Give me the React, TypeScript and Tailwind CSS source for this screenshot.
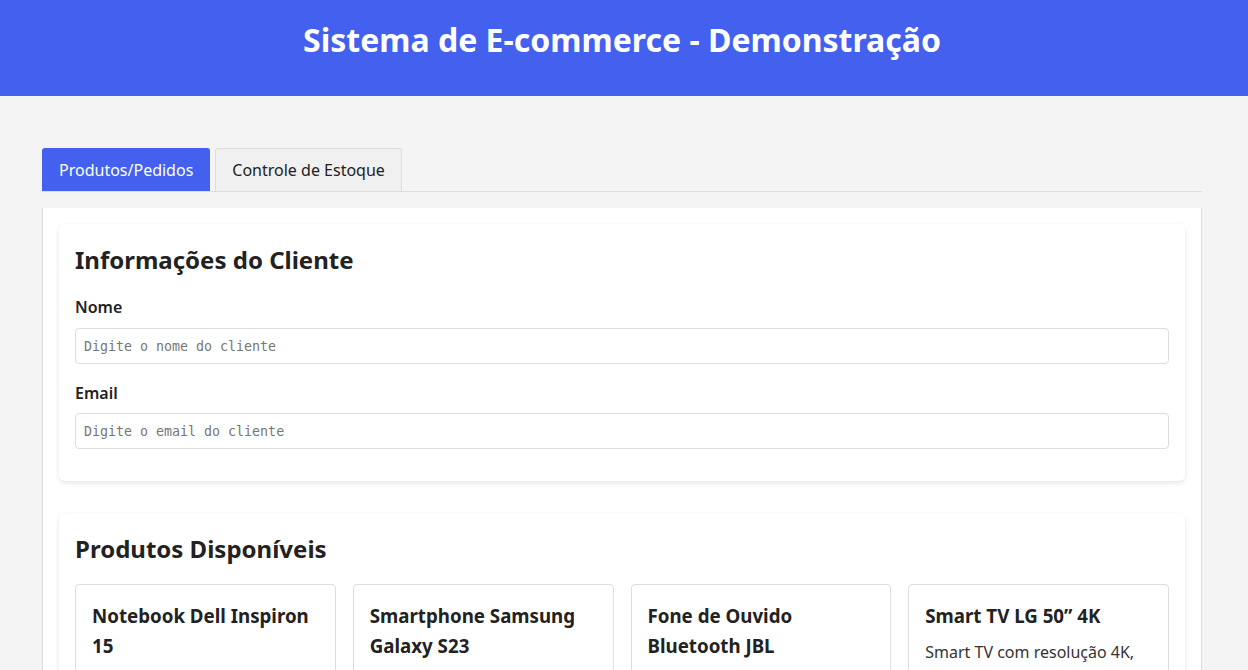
import React, { useState } from "react";

const products = [
  {
    name: "Notebook Dell Inspiron 15",
    description: "Notebook com processador Intel Core i7, 16GB de RAM e SSD de 512GB.",
  },
  {
    name: "Smartphone Samsung Galaxy S23",
    description: "Smartphone com tela de 6.1 polegadas, câmera tripla e 256GB.",
  },
  {
    name: "Fone de Ouvido Bluetooth JBL",
    description: "Fone sem fio com cancelamento de ruído e bateria de 30 horas.",
  },
  {
    name: "Smart TV LG 50\u201D 4K",
    description: "Smart TV com resolução 4K, HDR e sistema webOS.",
  },
];

const App = () => {
  const [tab, setTab] = useState<"produtos" | "estoque">("produtos");

  return (
    <div
      className="min-h-screen bg-[#f4f4f4] text-[#222]"
      style={{ fontFamily: '"Noto Sans", "Open Sans", sans-serif' }}
    >
      <header className="h-24 bg-[#4361ee] flex justify-center pt-[18px] pr-1">
        <h1 className="text-[32px] leading-[44px] font-bold text-white">
          Sistema de E-commerce - Demonstração
        </h1>
      </header>

      <main className="pl-[42px] pt-[52px]">
        <div className="w-[1160px]">
          <div className="flex gap-[5px] border-b border-[#dddddd]">
            <button
              onClick={() => setTab("produtos")}
              className={`h-[43px] px-4 text-base rounded-t-[3px] border border-b-0 ${
                tab === "produtos"
                  ? "bg-[#4361ee] border-[#4361ee] text-white"
                  : "bg-[#f0f0f0] border-[#dddddd] text-[#222]"
              }`}
            >
              Produtos/Pedidos
            </button>
            <button
              onClick={() => setTab("estoque")}
              className={`h-[43px] px-4 text-base rounded-t-[3px] border border-b-0 ${
                tab === "estoque"
                  ? "bg-[#4361ee] border-[#4361ee] text-white"
                  : "bg-[#f0f0f0] border-[#dddddd] text-[#222]"
              }`}
            >
              Controle de Estoque
            </button>
          </div>

          <div className="mt-4 bg-white border-x border-[#dddddd] px-4 pt-4 pb-8 flex flex-col gap-8">
            <section className="bg-white rounded-md shadow-[0_2px_5px_rgba(0,0,0,0.1)] px-4 pt-[20px] pb-4">
              <h2 className="text-2xl leading-[32px] font-bold mb-[19px]">Informações do Cliente</h2>

              <div className="mb-4">
                <label htmlFor="nome" className="block font-semibold text-base leading-6 mb-[9px]">
                  Nome
                </label>
                <input
                  id="nome"
                  type="text"
                  placeholder="Digite o nome do cliente"
                  className="w-full h-9 px-2 border border-[#dddddd] rounded-[4px] placeholder:text-[#777]"
                  style={{ fontFamily: '"DejaVu Sans Mono", monospace', fontSize: "13.3px" }}
                />
              </div>

              <div className="mb-4">
                <label htmlFor="email" className="block font-semibold text-base leading-6 mb-[8px] mt-[17px]">
                  Email
                </label>
                <input
                  id="email"
                  type="email"
                  placeholder="Digite o email do cliente"
                  className="w-full h-9 px-2 border border-[#dddddd] rounded-[4px] placeholder:text-[#777]"
                  style={{ fontFamily: '"DejaVu Sans Mono", monospace', fontSize: "13.3px" }}
                />
              </div>
            </section>

            <section className="bg-white rounded-md shadow-[0_2px_5px_rgba(0,0,0,0.1)] px-4 pt-[20px] pb-4">
              <h2 className="text-2xl leading-[32px] font-bold mb-[19px]">Produtos Disponíveis</h2>
              <div className="grid grid-cols-4 gap-[17px]">
                {products.map((p) => (
                  <div key={p.name} className="border border-[#dddddd] rounded-[4px] p-4">
                    <h3 className="text-[18.72px] leading-[30px] font-bold mb-[9px]">{p.name}</h3>
                    <p className="text-base leading-6 text-[#333]">{p.description}</p>
                  </div>
                ))}
              </div>
            </section>
          </div>
        </div>
      </main>
    </div>
  );
};

export default App;
